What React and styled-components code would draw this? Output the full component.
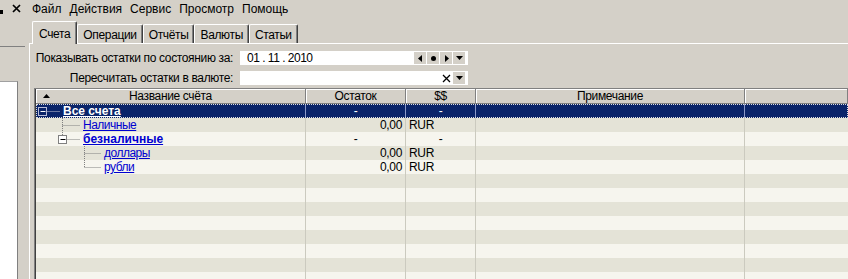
import React from "react";
import styled, { createGlobalStyle } from "styled-components";

const GlobalStyle = createGlobalStyle`
  html, body {
    margin: 0;
    padding: 0;
    background: #d4d0c8;
  }
  body {
    font-family: "Liberation Sans", Arial, sans-serif;
    font-size: 12px;
    letter-spacing: -0.35px;
    color: #000;
  }
`;

const COLS = "270px 100px 70px 269px 1fr";

const rows = [
  { name: "Все счета", level: 0, bold: true, box: true, rest: "-", cur: "-" },
  { name: "Наличные", level: 1, rest: "0,00", cur: "RUR" },
  { name: "безналичные", level: 1, bold: true, box: true, last: true, rest: "-", cur: "-" },
  { name: "доллары", level: 2, rest: "0,00", cur: "RUR" },
  { name: "рубли", level: 2, last: true, rest: "0,00", cur: "RUR" },
];

const CX = [6, 26, 48];
const TX = [27, 47, 68];

const TreeLines = ({ level, last, box, sel }) => {
  const cx = CX[level] + 0.5;
  const tx = TX[level];
  const line = sel ? "#c8c8d8" : "#808080";
  return (
    <svg width={tx} height="14" style={{ flex: "none" }}>
      <g stroke={line} strokeDasharray="1 1" fill="none">
        {level > 0 && <line x1={cx} y1="0" x2={cx} y2={box ? 3 : last ? 7.5 : 14} />}
        <line x1={box ? cx + 5 : cx} y1="7.5" x2={tx - 3} y2="7.5" />
      </g>
      {box && (
        <g>
          <rect x={cx - 4} y="3.5" width="8" height="8" fill={sel ? "none" : "#fff"} stroke={sel ? "#b8bcd8" : "#808080"} />
          <line x1={cx - 2} y1="7.5" x2={cx + 3} y2="7.5" stroke={sel ? "#fff" : "#000"} />
        </g>
      )}
    </svg>
  );
};

const App = () => {
  const filler = Array.from({ length: 9 });
  return (
    <>
      <GlobalStyle />
      <Screen>
        <LeftPane>
          <PaneHeader>
            <svg width="4" height="14">
              <rect x="0" y="6" width="3" height="4" fill="#000" />
            </svg>
            <svg width="9" height="9">
              <path d="M1 1 L8 8 M8 1 L1 8" stroke="#000" strokeWidth="1.7" />
            </svg>
          </PaneHeader>
          <PaneGap />
          <ListBox />
        </LeftPane>
        <Main>
          <MenuBar>
            {["Файл", "Действия", "Сервис", "Просмотр", "Помощь"].map((m) => (
              <MenuItem key={m}>{m}</MenuItem>
            ))}
          </MenuBar>
          <TabStrip>
            {["Счета", "Операции", "Отчёты", "Валюты", "Статьи"].map((t, i) => (
              <Tab key={t} $active={i === 0}>{t}</Tab>
            ))}
          </TabStrip>
          <TabPanel>
            <Form>
              <Label>Показывать остатки по состоянию за:</Label>
              <Field>
                <FieldText>01 . 11 . 2010</FieldText>
                <FieldButton>
                  <svg width="5" height="7"><path d="M4 0 L4 7 L0 3.5 Z" fill="#000" /></svg>
                </FieldButton>
                <FieldButton>
                  <svg width="5" height="5"><circle cx="2.5" cy="2.5" r="2.5" fill="#000" /></svg>
                </FieldButton>
                <FieldButton>
                  <svg width="5" height="7"><path d="M1 0 L1 7 L5 3.5 Z" fill="#000" /></svg>
                </FieldButton>
                <FieldButton>
                  <svg width="7" height="4"><path d="M0 0 L7 0 L3.5 4 Z" fill="#000" /></svg>
                </FieldButton>
              </Field>
              <Label>Пересчитать остатки в валюте:</Label>
              <Field>
                <FieldText />
                <FieldButton $plain>
                  <svg width="9" height="9"><path d="M1 1 L8 8 M8 1 L1 8" stroke="#000" strokeWidth="1.3" /></svg>
                </FieldButton>
                <FieldButton>
                  <svg width="7" height="4"><path d="M0 0 L7 0 L3.5 4 Z" fill="#000" /></svg>
                </FieldButton>
              </Field>
            </Form>
            <Grid>
              <HeaderRow>
                <HeadCell $sort>
                  <svg width="7" height="4"><path d="M0 4 L7 4 L3.5 0 Z" fill="#000" /></svg>
                  <span>Название счёта</span>
                  <i />
                </HeadCell>
                <HeadCell>Остаток</HeadCell>
                <HeadCell>$$</HeadCell>
                <HeadCell>Примечание</HeadCell>
                <HeadCell />
              </HeaderRow>
              {rows.map((r, i) => (
                <Row key={r.name} $sel={i === 0} $odd={i % 2 === 1}>
                  <NameCell $sel={i === 0}>
                    <TreeLines level={r.level} last={r.last} box={r.box} sel={i === 0} />
                    <Link $bold={r.bold} $sel={i === 0}>{r.name}</Link>
                  </NameCell>
                  <Cell $sel={i === 0} $align={r.rest === "-" ? "center" : "right"}>{r.rest}</Cell>
                  <Cell $sel={i === 0} $align={r.cur === "-" ? "center" : "left"}>{r.cur}</Cell>
                  <Cell $sel={i === 0} />
                  <Cell $sel={i === 0} $last />
                </Row>
              ))}
              {filler.map((_, i) => (
                <Row key={i} $odd={(i + rows.length) % 2 === 1}>
                  <Cell />
                  <Cell />
                  <Cell />
                  <Cell />
                  <Cell $last />
                </Row>
              ))}
            </Grid>
          </TabPanel>
        </Main>
      </Screen>
    </>
  );
};

const Screen = styled.div`
  display: flex;
  width: 848px;
  height: 279px;
  overflow: hidden;
  background: #d4d0c8;
`;

const LeftPane = styled.div`
  width: 25px;
  flex: none;
  display: flex;
  flex-direction: column;
`;

const PaneHeader = styled.div`
  height: 47px;
  display: flex;
  align-items: flex-start;
  justify-content: space-between;
  padding: 4px 4px 0 0;
  box-sizing: border-box;
  border-bottom: 1px solid #808080;
`;

const PaneGap = styled.div`
  height: 34px;
`;

const ListBox = styled.div`
  flex: 1;
  width: 17px;
  background: #fff;
  border-top: 1px solid #a0a0a0;
  border-right: 1px solid #808080;
`;

const Main = styled.div`
  flex: 1;
  display: flex;
  flex-direction: column;
  min-width: 0;
`;

const MenuBar = styled.div`
  height: 17px;
  display: flex;
  align-items: center;
  padding-left: 3px;
`;

const MenuItem = styled.span`
  padding: 0 4px;
  white-space: nowrap;
  letter-spacing: 0;
`;

const TabStrip = styled.div`
  height: 22px;
  margin-top: 4px;
  margin-left: 4px;
  padding-left: 3px;
  display: flex;
  align-items: flex-end;
  position: relative;
  z-index: 1;
`;

const Tab = styled.div`
  box-sizing: border-box;
  height: ${(p) => (p.$active ? "23px" : "19px")};
  padding: ${(p) => (p.$active ? "0 6px 3px 6px" : "0 5px 1px 5px")};
  margin-bottom: ${(p) => (p.$active ? "-1px" : "0")};
  display: flex;
  align-items: flex-end;
  background: #d4d0c8;
  border-top: 1px solid #fff;
  border-left: 1px solid #fff;
  border-right: 1px solid #404040;
  box-shadow: inset -1px 0 #808080;
  border-radius: 2px 2px 0 0;
  white-space: nowrap;
`;

const TabPanel = styled.div`
  flex: 1;
  margin-left: 4px;
  border-top: 1px solid #fff;
  border-left: 1px solid #fff;
  display: flex;
  flex-direction: column;
  min-height: 0;
`;

const Form = styled.div`
  display: grid;
  grid-template-columns: 205px 228px;
  column-gap: 5px;
  row-gap: 6px;
  padding-top: 7px;
`;

const Label = styled.div`
  height: 14px;
  line-height: 14px;
  text-align: right;
  padding-right: 2px;
  white-space: nowrap;
`;

const Field = styled.div`
  height: 14px;
  background: #fff;
  display: flex;
  align-items: center;
  padding-right: 3px;
`;

const FieldText = styled.span`
  flex: 1;
  padding-left: 7px;
  white-space: nowrap;
  letter-spacing: -0.5px;
`;

const FieldButton = styled.span`
  width: 12px;
  height: 12px;
  margin-left: 1px;
  display: flex;
  align-items: center;
  justify-content: center;
  background: ${(p) => (p.$plain ? "transparent" : "#d4d0c8")};
`;

const Grid = styled.div`
  flex: 1;
  margin: 3px 0 0 4px;
  border-top: 1px solid #808080;
  border-left: 1px solid #808080;
  box-shadow: inset 1px 0 #404040;
  padding-left: 1px;
  overflow: hidden;
`;

const HeaderRow = styled.div`
  display: grid;
  grid-template-columns: ${COLS};
  height: 15px;
`;

const HeadCell = styled.div`
  box-sizing: border-box;
  border-right: 1px solid #808080;
  border-bottom: 1px solid #808080;
  box-shadow: inset 1px 1px #fff;
  display: ${(p) => (p.$sort ? "grid" : "flex")};
  grid-template-columns: 14px 1fr 14px;
  align-items: center;
  justify-content: center;
  line-height: 13px;
  white-space: nowrap;
  svg {
    margin-left: 7px;
  }
  span {
    text-align: center;
  }
`;

const Row = styled.div`
  display: grid;
  grid-template-columns: ${COLS};
  height: 14px;
  line-height: 14px;
  background: ${(p) => (p.$sel ? "#0a246a" : p.$odd ? "#e4e3d7" : "#f6f5ee")};
  color: ${(p) => (p.$sel ? "#fff" : "#000")};
  outline: ${(p) => (p.$sel ? "1px dotted #e0e0e0" : "none")};
  outline-offset: -1px;
`;

const Cell = styled.div`
  box-sizing: border-box;
  border-right: ${(p) => (p.$last ? "none" : `1px solid ${p.$sel ? "#8a98c8" : "#cbcabf"}`)};
  text-align: ${(p) => p.$align || "left"};
  padding: 0 3px;
  white-space: nowrap;
  overflow: hidden;
`;

const NameCell = styled(Cell)`
  display: flex;
  align-items: center;
  padding: 0;
`;

const Link = styled.span`
  color: ${(p) => (p.$sel ? "#fff" : "#0000d0")};
  font-weight: ${(p) => (p.$bold ? "bold" : "normal")};
  letter-spacing: ${(p) => (p.$bold ? "0" : "-0.5px")};
  text-decoration: underline;
  line-height: 14px;
`;

export default App;
